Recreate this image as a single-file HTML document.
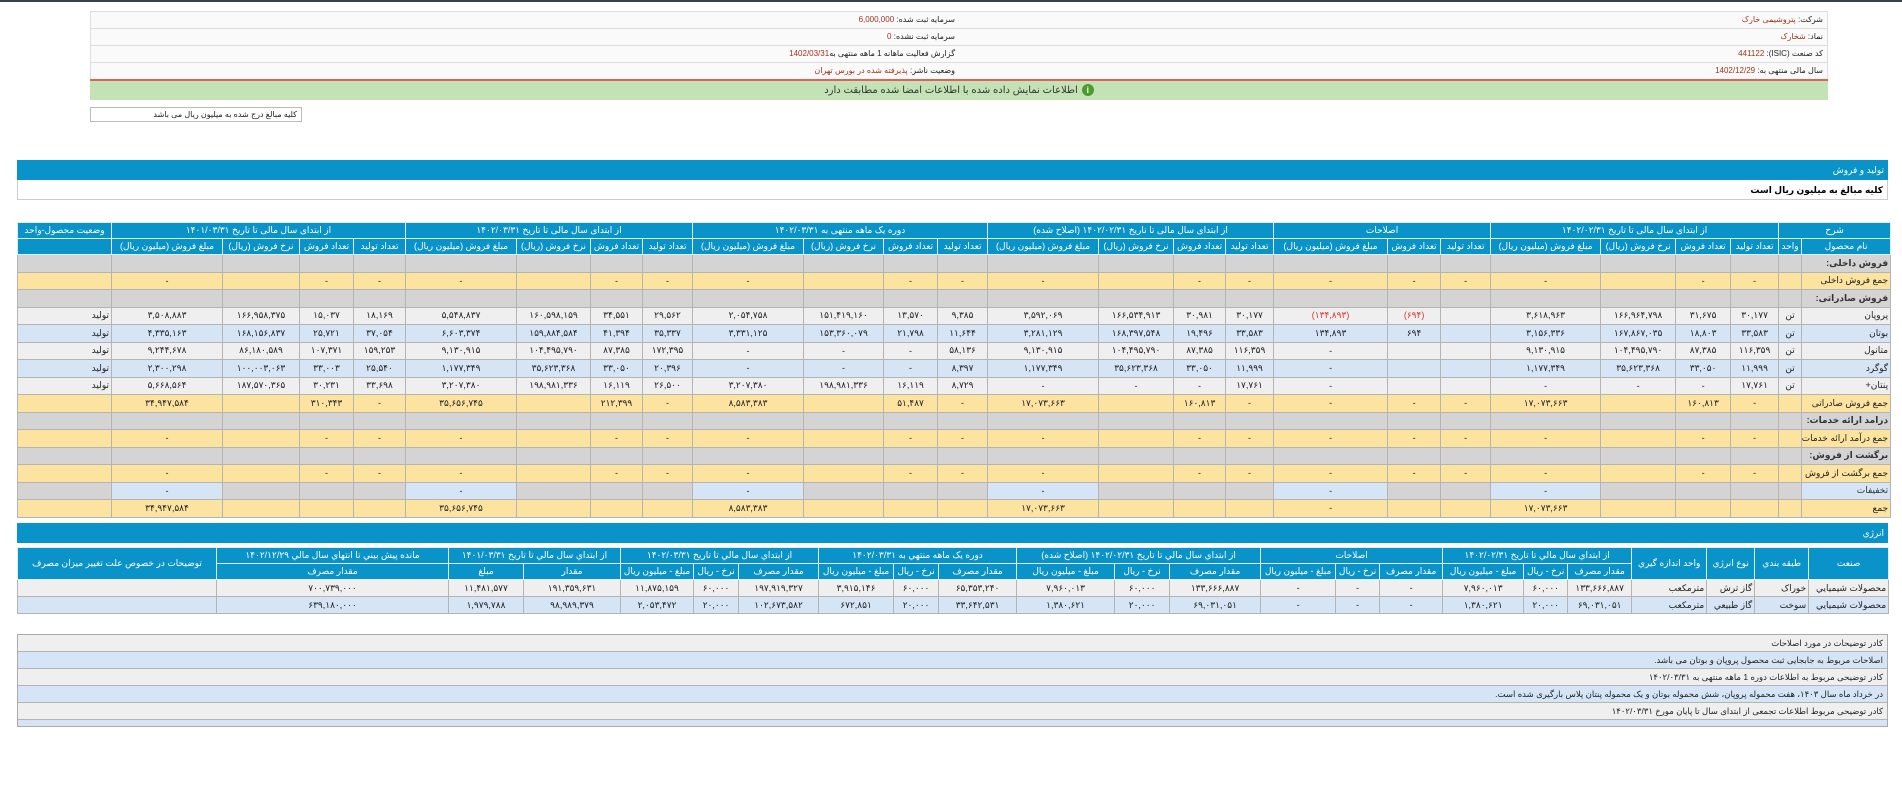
<!DOCTYPE html>
<html lang="fa" dir="rtl"><head><meta charset="utf-8">
<style>
*{box-sizing:border-box;margin:0;padding:0}
body{width:1902px;height:803px;overflow:hidden;background:#fff;font-family:"Liberation Sans","DejaVu Sans",sans-serif;font-size:9px;color:#222;direction:rtl;position:relative;border-top:2px solid #3a4148}
.abs{position:absolute}
#info{left:90px;top:9px;width:1738px;border:1px solid #ddd;background:#fafafa}
#info .r{height:17px;border-bottom:1px solid #ddd;display:flex}
#info .r div{width:50%;padding:3px 4px;font-size:8px;white-space:nowrap}
#info .v{color:#a0331a}
#red{left:90px;top:77px;width:1738px;height:2px;background:#e0605a}
#green{left:90px;top:79px;width:1738px;height:19px;background:#c3e3b6;text-align:center;font-size:10px;line-height:19px;color:#333}
#green b{display:inline-block;width:12px;height:12px;border-radius:6px;background:#4a9c2c;color:#fff;font-size:9px;line-height:12px;vertical-align:middle;margin-left:4px}
#small{left:90px;top:105px;width:212px;height:15px;border:1px solid #bbb;font-size:8px;padding:2px 4px}
.bar{left:17px;width:1871px;height:20px;background:#0a93c8;color:#fff;font-size:9px;padding:5px 4px}
#kol{left:17px;top:178px;width:1871px;height:20px;border:1px solid #ccc;border-top:0;font-weight:bold;font-size:9px;padding:5px 4px;color:#000}
table{border-collapse:collapse;table-layout:fixed;position:absolute;left:17px;width:1871px}
td,th{border:1px solid #b4b4b4;text-align:center;white-space:nowrap;overflow:hidden;font-weight:normal;padding:0 2px}
th{background:#0a93c8;color:#fff;border-color:#dfeef6;height:16px;font-size:9px}
#main td{height:17.5px}
td.l{text-align:right}
tr.g td{background:#d4d4d4}
tr.g td.l{font-weight:bold;color:#333}
tr.y td{background:#fde3a0}
tr.w td{background:#efefef}
tr.b td{background:#d5e5f5}
td.bb{background:#d5e5f5!important}
.red{color:#d33}
#en td{height:17px}
#notes{left:17px;top:632px;width:1871px;border:1px solid #aaa}
#notes div{height:17px;border-bottom:1px solid #b4b4b4;padding:3px 4px;font-size:8.5px}
#notes .a{background:#efefef}#notes .c{background:#d5e5f5}
</style></head><body>

<div id="info" class="abs">
<div class="r"><div>شرکت: <span class="v">پتروشیمی خارک</span></div><div>سرمایه ثبت شده: <span class="v">6,000,000</span></div></div>
<div class="r"><div>نماد: <span class="v">شخارک</span></div><div>سرمایه ثبت نشده: <span class="v">0</span></div></div>
<div class="r"><div>کد صنعت (ISIC): <span class="v">441122</span></div><div>گزارش فعالیت ماهانه 1 ماهه منتهی به<span class="v">1402/03/31</span></div></div>
<div class="r" style="border-bottom:0"><div>سال مالی منتهی به: <span class="v">1402/12/29</span></div><div>وضعیت ناشر: <span class="v">پذیرفته شده در بورس تهران</span></div></div>
</div>
<div id="red" class="abs"></div>
<div id="green" class="abs"><b>i</b>اطلاعات نمایش داده شده با اطلاعات امضا شده مطابقت دارد</div>
<div id="small" class="abs">کلیه مبالغ درج شده به میلیون ریال می باشد</div>

<div class="abs bar" style="top:158px">تولید و فروش</div>
<div id="kol" class="abs">کلیه مبالغ به میلیون ریال است</div>

<table id="main" style="top:220px">
<colgroup><col style="width:89px"><col style="width:23px"><col style="width:48px"><col style="width:55px"><col style="width:75px"><col style="width:110px"><col style="width:50px"><col style="width:53px"><col style="width:114px"><col style="width:48px"><col style="width:52px"><col style="width:75px"><col style="width:111px"><col style="width:50px"><col style="width:54px"><col style="width:80px"><col style="width:111px"><col style="width:50px"><col style="width:52px"><col style="width:74px"><col style="width:111px"><col style="width:52px"><col style="width:54px"><col style="width:77px"><col style="width:111px"><col style="width:94px"></colgroup>
<tr><th colspan="2">شرح</th><th colspan="4">از ابتدای سال مالی تا تاریخ ۱۴۰۲/۰۲/۳۱</th><th colspan="3">اصلاحات</th><th colspan="4">از ابتدای سال مالی تا تاریخ ۱۴۰۲/۰۲/۳۱ (اصلاح شده)</th><th colspan="4">دوره یک ماهه منتهی به ۱۴۰۲/۰۳/۳۱</th><th colspan="4">از ابتدای سال مالی تا تاریخ ۱۴۰۲/۰۳/۳۱</th><th colspan="4">از ابتدای سال مالی تا تاریخ ۱۴۰۱/۰۳/۳۱</th><th>وضعیت محصول-واحد</th></tr>
<tr><th>نام محصول</th><th>واحد</th><th>تعداد تولید</th><th>تعداد فروش</th><th>نرخ فروش (ریال)</th><th>مبلغ فروش (میلیون ریال)</th><th>تعداد تولید</th><th>تعداد فروش</th><th>مبلغ فروش (میلیون ریال)</th><th>تعداد تولید</th><th>تعداد فروش</th><th>نرخ فروش (ریال)</th><th>مبلغ فروش (میلیون ریال)</th><th>تعداد تولید</th><th>تعداد فروش</th><th>نرخ فروش (ریال)</th><th>مبلغ فروش (میلیون ریال)</th><th>تعداد تولید</th><th>تعداد فروش</th><th>نرخ فروش (ریال)</th><th>مبلغ فروش (میلیون ریال)</th><th>تعداد تولید</th><th>تعداد فروش</th><th>نرخ فروش (ریال)</th><th>مبلغ فروش (میلیون ریال)</th><th></th></tr>
<tr class="g"><td class="l">فروش داخلی:</td><td></td><td></td><td></td><td></td><td></td><td></td><td></td><td></td><td></td><td></td><td></td><td></td><td></td><td></td><td></td><td></td><td></td><td></td><td></td><td></td><td></td><td></td><td></td><td></td><td></td></tr>
<tr class="y"><td class="l">جمع فروش داخلی</td><td></td><td>-</td><td>-</td><td></td><td>-</td><td>-</td><td>-</td><td>-</td><td>-</td><td>-</td><td></td><td>-</td><td>-</td><td>-</td><td></td><td>-</td><td>-</td><td>-</td><td></td><td>-</td><td>-</td><td>-</td><td></td><td>-</td><td></td></tr>
<tr class="g"><td class="l">فروش صادراتی:</td><td></td><td></td><td></td><td></td><td></td><td></td><td></td><td></td><td></td><td></td><td></td><td></td><td></td><td></td><td></td><td></td><td></td><td></td><td></td><td></td><td></td><td></td><td></td><td></td><td></td></tr>
<tr class="w"><td class="l">پروپان</td><td>تن</td><td>۳۰,۱۷۷</td><td>۳۱,۶۷۵</td><td>۱۶۶,۹۶۴,۷۹۸</td><td>۳,۶۱۸,۹۶۳</td><td></td><td class="red">(۶۹۴)</td><td class="red">(۱۳۴,۸۹۳)</td><td>۳۰,۱۷۷</td><td>۳۰,۹۸۱</td><td>۱۶۶,۵۳۴,۹۱۳</td><td>۳,۵۹۲,۰۶۹</td><td>۹,۳۸۵</td><td>۱۳,۵۷۰</td><td>۱۵۱,۴۱۹,۱۶۰</td><td>۲,۰۵۴,۷۵۸</td><td>۲۹,۵۶۲</td><td>۳۴,۵۵۱</td><td>۱۶۰,۵۹۸,۱۵۹</td><td>۵,۵۴۸,۸۳۷</td><td>۱۸,۱۶۹</td><td>۱۵,۰۳۷</td><td>۱۶۶,۹۵۸,۳۷۵</td><td>۳,۵۰۸,۸۸۳</td><td class="l">تولید</td></tr>
<tr class="b"><td class="l">بوتان</td><td>تن</td><td>۳۳,۵۸۳</td><td>۱۸,۸۰۳</td><td>۱۶۷,۸۶۷,۰۳۵</td><td>۳,۱۵۶,۳۳۶</td><td></td><td>۶۹۴</td><td>۱۳۴,۸۹۳</td><td>۳۳,۵۸۳</td><td>۱۹,۴۹۶</td><td>۱۶۸,۳۹۷,۵۴۸</td><td>۳,۲۸۱,۱۲۹</td><td>۱۱,۶۴۴</td><td>۲۱,۷۹۸</td><td>۱۵۳,۳۶۰,۰۷۹</td><td>۳,۳۳۱,۱۲۵</td><td>۳۵,۳۳۷</td><td>۴۱,۳۹۴</td><td>۱۵۹,۸۸۴,۵۸۴</td><td>۶,۶۰۳,۳۷۴</td><td>۳۷,۰۵۴</td><td>۲۵,۷۲۱</td><td>۱۶۸,۱۵۶,۸۳۷</td><td>۴,۳۳۵,۱۶۳</td><td class="l">تولید</td></tr>
<tr class="w"><td class="l">متانول</td><td>تن</td><td>۱۱۶,۳۵۹</td><td>۸۷,۳۸۵</td><td>۱۰۴,۴۹۵,۷۹۰</td><td>۹,۱۳۰,۹۱۵</td><td></td><td></td><td>-</td><td>۱۱۶,۳۵۹</td><td>۸۷,۳۸۵</td><td>۱۰۴,۴۹۵,۷۹۰</td><td>۹,۱۳۰,۹۱۵</td><td>۵۸,۱۳۶</td><td>-</td><td>-</td><td>-</td><td>۱۷۲,۳۹۵</td><td>۸۷,۳۸۵</td><td>۱۰۴,۴۹۵,۷۹۰</td><td>۹,۱۳۰,۹۱۵</td><td>۱۵۹,۲۵۳</td><td>۱۰۷,۳۷۱</td><td>۸۶,۱۸۰,۵۸۹</td><td>۹,۲۴۴,۶۷۸</td><td class="l">تولید</td></tr>
<tr class="b"><td class="l">گوگرد</td><td>تن</td><td>۱۱,۹۹۹</td><td>۳۳,۰۵۰</td><td>۳۵,۶۲۳,۳۶۸</td><td>۱,۱۷۷,۳۴۹</td><td></td><td></td><td>-</td><td>۱۱,۹۹۹</td><td>۳۳,۰۵۰</td><td>۳۵,۶۲۳,۳۶۸</td><td>۱,۱۷۷,۳۴۹</td><td>۸,۳۹۷</td><td>-</td><td>-</td><td>-</td><td>۲۰,۳۹۶</td><td>۳۳,۰۵۰</td><td>۳۵,۶۲۳,۳۶۸</td><td>۱,۱۷۷,۳۴۹</td><td>۲۵,۵۴۰</td><td>۳۳,۰۰۳</td><td>۱۰۰,۰۰۳,۰۶۳</td><td>۲,۳۰۰,۲۹۸</td><td class="l">تولید</td></tr>
<tr class="w"><td class="l">پنتان+</td><td>تن</td><td>۱۷,۷۶۱</td><td>-</td><td>-</td><td>-</td><td></td><td></td><td>-</td><td>۱۷,۷۶۱</td><td>-</td><td>-</td><td>-</td><td>۸,۷۲۹</td><td>۱۶,۱۱۹</td><td>۱۹۸,۹۸۱,۳۳۶</td><td>۳,۲۰۷,۳۸۰</td><td>۲۶,۵۰۰</td><td>۱۶,۱۱۹</td><td>۱۹۸,۹۸۱,۳۳۶</td><td>۳,۲۰۷,۳۸۰</td><td>۳۳,۶۹۸</td><td>۳۰,۲۳۱</td><td>۱۸۷,۵۷۰,۳۶۵</td><td>۵,۶۶۸,۵۶۴</td><td class="l">تولید</td></tr>
<tr class="y"><td class="l">جمع فروش صادراتی</td><td></td><td>-</td><td>۱۶۰,۸۱۳</td><td></td><td>۱۷,۰۷۳,۶۶۳</td><td>-</td><td>-</td><td>-</td><td>-</td><td>۱۶۰,۸۱۳</td><td></td><td>۱۷,۰۷۳,۶۶۳</td><td>-</td><td>۵۱,۴۸۷</td><td></td><td>۸,۵۸۳,۳۸۳</td><td>-</td><td>۲۱۲,۳۹۹</td><td></td><td>۳۵,۶۵۶,۷۴۵</td><td>-</td><td>۳۱۰,۳۴۳</td><td></td><td>۳۴,۹۴۷,۵۸۴</td><td></td></tr>
<tr class="g"><td class="l">درامد ارائه خدمات:</td><td></td><td></td><td></td><td></td><td></td><td></td><td></td><td></td><td></td><td></td><td></td><td></td><td></td><td></td><td></td><td></td><td></td><td></td><td></td><td></td><td></td><td></td><td></td><td></td><td></td></tr>
<tr class="y"><td class="l">جمع درآمد ارائه خدمات</td><td></td><td>-</td><td>-</td><td></td><td>-</td><td>-</td><td>-</td><td>-</td><td>-</td><td>-</td><td></td><td>-</td><td>-</td><td>-</td><td></td><td>-</td><td>-</td><td>-</td><td></td><td>-</td><td>-</td><td>-</td><td></td><td>-</td><td></td></tr>
<tr class="g"><td class="l">برگشت از فروش:</td><td></td><td></td><td></td><td></td><td></td><td></td><td></td><td></td><td></td><td></td><td></td><td></td><td></td><td></td><td></td><td></td><td></td><td></td><td></td><td></td><td></td><td></td><td></td><td></td><td></td></tr>
<tr class="y"><td class="l">جمع برگشت از فروش</td><td></td><td>-</td><td>-</td><td></td><td>-</td><td>-</td><td>-</td><td>-</td><td>-</td><td>-</td><td></td><td>-</td><td>-</td><td>-</td><td></td><td>-</td><td>-</td><td>-</td><td></td><td>-</td><td>-</td><td>-</td><td></td><td>-</td><td></td></tr>
<tr class="g"><td class="l bb" style="font-weight:normal">تخفیفات</td><td></td><td></td><td></td><td></td><td class="bb">-</td><td></td><td></td><td class="bb">-</td><td></td><td></td><td></td><td class="bb">-</td><td></td><td></td><td></td><td class="bb">-</td><td></td><td></td><td></td><td class="bb">-</td><td></td><td></td><td></td><td class="bb">-</td><td></td></tr>
<tr class="y"><td class="l">جمع</td><td></td><td></td><td></td><td></td><td>۱۷,۰۷۳,۶۶۳</td><td></td><td></td><td>-</td><td></td><td></td><td></td><td>۱۷,۰۷۳,۶۶۳</td><td></td><td></td><td></td><td>۸,۵۸۳,۳۸۳</td><td></td><td></td><td></td><td>۳۵,۶۵۶,۷۴۵</td><td></td><td></td><td></td><td>۳۴,۹۴۷,۵۸۴</td><td></td></tr>
</table>

<div class="abs bar" style="top:521px">انرژي</div>

<table id="en" style="top:545px">
<colgroup><col style="width:80px"><col style="width:54px"><col style="width:48px"><col style="width:75px"><col style="width:64px"><col style="width:44px"><col style="width:81px"><col style="width:63px"><col style="width:44px"><col style="width:75px"><col style="width:91px"><col style="width:55px"><col style="width:98px"><col style="width:78px"><col style="width:45px"><col style="width:75px"><col style="width:80px"><col style="width:45px"><col style="width:73px"><col style="width:97px"><col style="width:75px"><col style="width:232px"><col style="width:199px"></colgroup>
<tr><th rowspan="2">صنعت</th><th rowspan="2">طبقه بندي</th><th rowspan="2">نوع انرژي</th><th rowspan="2">واحد اندازه گيري</th><th colspan="3">از ابتداي سال مالي تا تاريخ ۱۴۰۲/۰۲/۳۱</th><th colspan="3">اصلاحات</th><th colspan="3">از ابتداي سال مالي تا تاريخ ۱۴۰۲/۰۲/۳۱ (اصلاح شده)</th><th colspan="3">دوره يک ماهه منتهي به ۱۴۰۲/۰۳/۳۱</th><th colspan="3">از ابتداي سال مالي تا تاريخ ۱۴۰۲/۰۳/۳۱</th><th colspan="2">از ابتداي سال مالي تا تاريخ ۱۴۰۱/۰۳/۳۱</th><th>مانده پيش بيني تا انتهاي سال مالي ۱۴۰۲/۱۲/۲۹</th><th rowspan="2">توضيحات در خصوص علت تغيير ميزان مصرف</th></tr>
<tr><th>مقدار مصرف</th><th>نرخ - ريال</th><th>مبلغ - ميليون ريال</th><th>مقدار مصرف</th><th>نرخ - ريال</th><th>مبلغ - ميليون ريال</th><th>مقدار مصرف</th><th>نرخ - ريال</th><th>مبلغ - ميليون ريال</th><th>مقدار مصرف</th><th>نرخ - ريال</th><th>مبلغ - ميليون ريال</th><th>مقدار مصرف</th><th>نرخ - ريال</th><th>مبلغ - ميليون ريال</th><th>مقدار</th><th>مبلغ</th><th>مقدار مصرف</th></tr>
<tr class="w"><td class="l">محصولات شيميايي</td><td class="l">خوراک</td><td class="l">گاز ترش</td><td class="l">مترمکعب</td><td>۱۳۳,۶۶۶,۸۸۷</td><td>۶۰,۰۰۰</td><td>۷,۹۶۰,۰۱۳</td><td>-</td><td>-</td><td>-</td><td>۱۳۳,۶۶۶,۸۸۷</td><td>۶۰,۰۰۰</td><td>۷,۹۶۰,۰۱۳</td><td>۶۵,۳۵۳,۲۴۰</td><td>۶۰,۰۰۰</td><td>۳,۹۱۵,۱۴۶</td><td>۱۹۷,۹۱۹,۳۲۷</td><td>۶۰,۰۰۰</td><td>۱۱,۸۷۵,۱۵۹</td><td>۱۹۱,۳۵۹,۶۳۱</td><td>۱۱,۴۸۱,۵۷۷</td><td>۷۰۰,۷۳۹,۰۰۰</td><td></td></tr>
<tr class="b"><td class="l">محصولات شيميايي</td><td class="l">سوخت</td><td class="l">گاز طبيعي</td><td class="l">مترمکعب</td><td>۶۹,۰۳۱,۰۵۱</td><td>۲۰,۰۰۰</td><td>۱,۳۸۰,۶۲۱</td><td>-</td><td>-</td><td>-</td><td>۶۹,۰۳۱,۰۵۱</td><td>۲۰,۰۰۰</td><td>۱,۳۸۰,۶۲۱</td><td>۳۳,۶۴۲,۵۳۱</td><td>۲۰,۰۰۰</td><td>۶۷۲,۸۵۱</td><td>۱۰۲,۶۷۳,۵۸۲</td><td>۲۰,۰۰۰</td><td>۲,۰۵۳,۴۷۲</td><td>۹۸,۹۸۹,۳۷۹</td><td>۱,۹۷۹,۷۸۸</td><td>۶۳۹,۱۸۰,۰۰۰</td><td></td></tr>
</table>

<div id="notes" class="abs">
<div class="a">کادر توضیحات در مورد اصلاحات</div>
<div class="c">اصلاحات مربوط به جابجایی ثبت محصول پروپان و بوتان می باشد.</div>
<div class="a">کادر توضیحی مربوط به اطلاعات دوره 1 ماهه منتهی به ۱۴۰۲/۰۳/۳۱</div>
<div class="c">در خرداد ماه سال ۱۴۰۳، هفت محموله پروپان، شش محموله بوتان و یک محموله پنتان پلاس بارگیری شده است.</div>
<div class="a">کادر توضیحی مربوط اطلاعات تجمعی از ابتدای سال تا پایان مورخ ۱۴۰۲/۰۳/۳۱</div>
<div class="c" style="height:6px;border-bottom:0"></div>
</div>
</body></html>
